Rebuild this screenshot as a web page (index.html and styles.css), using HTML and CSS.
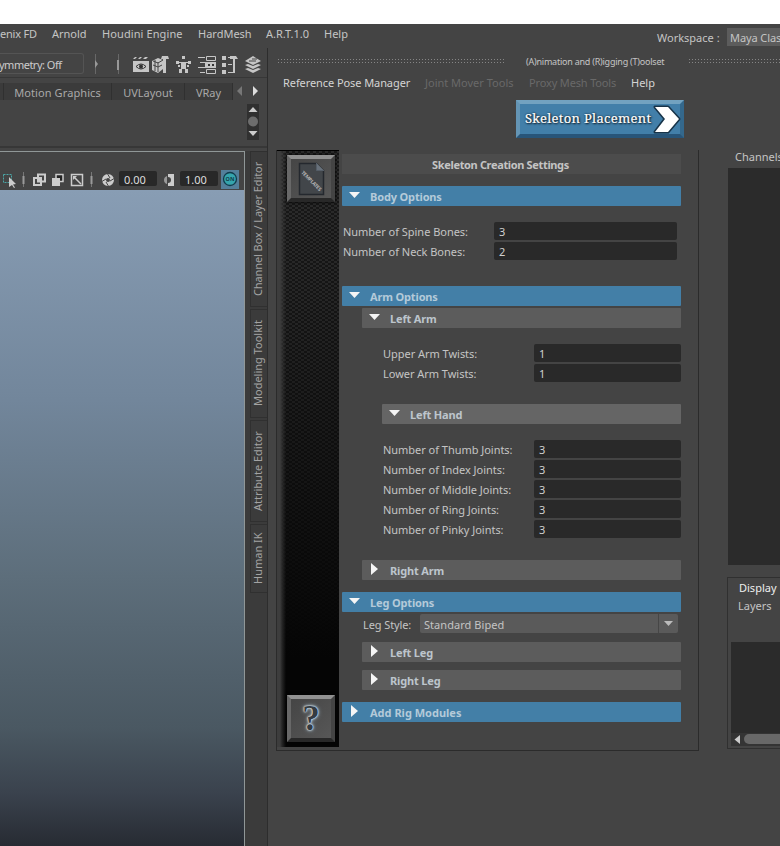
FILE: index.html
```html
<!DOCTYPE html>
<html lang="en">
<head>
<meta charset="utf-8">
<title>Animation and Rigging Toolset</title>
<link rel="stylesheet" href="styles.css">
</head>
<body>
<div class="blank"></div>
<nav class="menubar">
  <span class="m-fd">enix FD</span><span class="m-arnold">Arnold</span><span class="m-houdini">Houdini Engine</span><span class="m-hard">HardMesh</span><span class="m-art">A.R.T.1.0</span><span class="m-help">Help</span>
  <span class="m-work">Workspace :</span><span class="m-select">Maya Clas</span>
</nav>
<div class="main">
  <section class="left">
    <div class="status">
      <div class="symmetry">ymmetry: Off</div>
      <svg class="status-icons" width="183" height="30" viewBox="84 48 183 30">
        <path d="M95.500 54v20M118.500 54v20" stroke="#686868"/>
        <path d="M95 60l3 4-3 4z" fill="#999"/><path d="M117 60h2v10h-2z" fill="#999"/>
        <g fill="#c6c6c6">
          <path d="M133 61h16v11h-16z"/><path d="M133 59l2-2h2l-2 2zM138 59l2-2h2l-2 2zM143 59l2-2h3l-2 2z"/>
          <path d="M136 66.500q5-5 10 0q-5 5-10 0" fill="#c6c6c6" stroke="#333"/><circle cx="141" cy="66.500" r="2" fill="#333"/>
          <path d="M152 61l6-3 5 2v9l-5 4-6-3z"/><path d="M162 56h6l1 3h-3v14h-3V59h-2z"/>
          <path d="M153 65l5 2 4-2M158 62v10M155 60v11M153 61l5 2 5-3" fill="none" stroke="#444"/>
          <rect x="182" y="56" width="3" height="3"/><path d="M176 61h3v1h9v-1h3v3h-3v-1h-2v6h2v4h-3v-4h-3v4h-3v-4h2v-6h-2v1h-3z"/>
          <path d="M178 65h2v2h-2zM187 65h2v2h-2z"/>
          <path d="M198 57h7v1h-7zM200 62h5v1h-5zM198 67h7v1h-7zM200 72h5v1h-5z"/>
          <path d="M206.500 56.500h9v4h-9zM206.500 69.500h9v4h-9z" fill="none" stroke="#c6c6c6"/><path d="M205 62h11v6h-11z"/><path d="M208 64h2v2h-2zM212 64h2v2h-2z" fill="#333"/>
          <path d="M222 56h4v4h-4zM222 63h4v4h-4zM222 70h4v4h-4zM228 57h4v1h-4zM228 64h4v1h-4zM228 72h6v1h-6zM230 56h6l2 3h-3v14h-2V59h-3z"/>
          <path d="M245 69l8 4 8-4-3-1-5 2-5-2zM245 65l8 4 8-4-3-1-5 2-5-2zM245 61l8-5 8 5-8 4z"/><path d="M249 61h7M252 59h5" stroke="#444" fill="none"/>
        </g>
      </svg>
    </div>
    <div class="shelf-tabs">
      <span class="stub"></span><span class="t1">Motion Graphics</span><span class="t2">UVLayout</span><span class="t3">VRay</span>
      <svg width="34" height="17" viewBox="233 83 34 17"><path d="M242 86v10l-5-5z" fill="#777"/><path d="M253 86v10l5-5z" fill="#ddd"/></svg>
    </div>
    <div class="shelf">
      <div class="spin"><svg width="12" height="36"><path d="M1.500 8h9L6 3zM1.500 27h9L6 32z" fill="#ccc"/><circle cx="6" cy="17.500" r="5" fill="#6d6d6d"/></svg></div>
    </div>
    <div class="work">
      <div class="view">
        <div class="view-tools">
          <svg width="119" height="20" viewBox="0 170 119 20">
            <path d="M3.500 174.500h8v8h-8z" fill="none" stroke="#4aa6a6" stroke-dasharray="2 1"/><path d="M9 177l7 7-3 .5 2 3-1 .5-2-3-3 2z" fill="#ccc"/>
            <path d="M23.500 172v15M91.500 172v15" stroke="#777"/><path d="M23.500 176v8M91.500 176v8" stroke="#999" stroke-width="2"/>
            <path d="M34 178h7v7h-7zM38 174.500h7v7h-7z" fill="none" stroke="#ccc" stroke-width="2"/><path d="M38 178h3v3h-3z" fill="#ccc"/>
            <path d="M56 174.500h7v7h-7z" fill="#252525" stroke="#ccc" stroke-width="1.500"/><path d="M52 178h8v8h-8z" fill="#ccc"/>
            <path d="M71.500 174.500h11v11h-11z" fill="none" stroke="#ccc" stroke-width="1.500"/><path d="M74 177l7 7" stroke="#ccc" stroke-width="1.500"/><path d="M73 176h4l-4 4z" fill="#ccc"/>
            <circle cx="108" cy="180" r="4" fill="none" stroke="#ccc" stroke-width="4"/><path d="M107 173l3 5M115 178l-5 3M109 187l-3-5M101 182l5-3" stroke="#444"/>
          </svg>
          <span class="num">0.00</span>
          <svg width="23" height="20" viewBox="157 170 23 20"><path d="M168 174h6v12h-6v-3a3 3 0 0 0 0-6z" fill="#ccc"/><path d="M167 176v8q-3-1-3-4t3-4" fill="#999"/></svg>
          <span class="num">1.00</span>
          <span class="on"><svg width="18" height="18"><circle cx="9" cy="9" r="6.500" fill="#35a5ad" stroke="#113c4c" stroke-width="1.300"/><text x="9" y="11" text-anchor="middle" font-size="5.500" font-weight="bold" fill="#123d4c">ON</text></svg></span>
        </div>
        <div class="canvas"></div>
      </div>
      <div class="side-tabs"><span class="s1">Channel Box / Layer Editor</span><span class="s2">Modeling Toolkit</span><span class="s3">Attribute Editor</span><span class="s4">Human IK</span></div>
    </div>
  </section>
  <section class="right">
    <div class="titlebar"><i class="dots d1"></i><span class="tool-title">(A)nimation and (R)igging (T)oolset</span><i class="dots d2"></i></div>
    <div class="toolmenu"><span class="r1">Reference Pose Manager</span><span class="r2">Joint Mover Tools</span><span class="r3">Proxy Mesh Tools</span><span class="r4">Help</span></div>
    <div class="cta-row"><div class="cta"><span>Skeleton Placement</span>
      <svg width="32" height="34" viewBox="0 0 32 34"><path d="M4 5h13l11 12-11 13H4l10-13z" fill="none" stroke="#183449" stroke-width="3" stroke-linejoin="round"/><path d="M4 5h13l11 12-11 13H4l10-13z" fill="#fff"/></svg></div></div>
    <div class="columns">
      <div class="panel">
        <aside class="rail">
          <div class="tile"><svg width="48" height="47"><path d="M12.500 8.500h17l7 7v24h-24z" fill="#42464a" stroke="#24282e" stroke-width="1.500"/><path d="M29.500 8v7.500H37" fill="#68717b" stroke="#555e68"/><text x="0" y="0" transform="translate(14 18) rotate(45)" font-size="5" textLength="26" font-weight="bold" class="tiny">TEMPLATES</text></svg></div>
          <div class="tile help"><span>?</span></div>
        </aside>
        <div class="content">
          <h1>Skeleton Creation Settings</h1>
          <div class="bar blue body-bar"><i class="down"></i><b>Body Options</b></div>
          <div class="fields body-fields">
            <div class="field"><label>Number of Spine Bones:</label><span>3</span></div>
            <div class="field"><label>Number of Neck Bones:</label><span>2</span></div>
          </div>
          <div class="bar blue"><i class="down"></i><b>Arm Options</b></div>
          <div class="nested arms">
            <div class="bar"><i class="down"></i><b>Left Arm</b></div>
            <div class="fields deep">
              <div class="field"><label>Upper Arm Twists:</label><span>1</span></div>
              <div class="field"><label>Lower Arm Twists:</label><span>1</span></div>
            </div>
            <div class="bar hand"><i class="down"></i><b>Left Hand</b></div>
            <div class="fields deep">
              <div class="field"><label>Number of Thumb Joints:</label><span>3</span></div>
              <div class="field"><label>Number of Index Joints:</label><span>3</span></div>
              <div class="field"><label>Number of Middle Joints:</label><span>3</span></div>
              <div class="field"><label>Number of Ring Joints:</label><span>3</span></div>
              <div class="field"><label>Number of Pinky Joints:</label><span>3</span></div>
            </div>
            <div class="bar"><i class="next"></i><b>Right Arm</b></div>
          </div>
          <div class="bar blue"><i class="down"></i><b>Leg Options</b></div>
          <div class="nested legs">
            <div class="leg-style"><label>Leg Style:</label><div class="combo"><span>Standard Biped</span><i></i></div></div>
            <div class="bar"><i class="next"></i><b>Left Leg</b></div>
            <div class="bar"><i class="next"></i><b>Right Leg</b></div>
          </div>
          <div class="bar blue"><i class="next"></i><b class="add">Add Rig Modules</b></div>
        </div>
      </div>
      <aside class="channels">
        <div class="ch-title">Channels</div>
        <div class="ch-body"></div>
        <div class="layers">
          <div class="display">Display</div><div class="layer-menu">Layers</div>
          <div class="layer-list"><svg width="49" height="13"><path d="M9 2v9L3.500 6.500z" fill="#ccc"/><rect x="13" y="1" width="50" height="10" rx="5" fill="#686868"/></svg></div>
        </div>
      </aside>
    </div>
  </section>
</div>
</body>
</html>
```
FILE: styles.css
```css
* { box-sizing: border-box; }
body { margin: 0; width: 780px; height: 846px; overflow: hidden; background: #444; color: #c4c4c4; font: 11px/20px "Noto Sans", sans-serif; white-space: nowrap; }
.blank { height: 24px; background: #fff; }
.menubar { display: flex; height: 24px; line-height: 20px; }
.menubar span { flex: none; }
.m-fd { width: 52px; letter-spacing: -.2px; }
.m-arnold { width: 50px; }
.m-houdini { width: 96px; letter-spacing: .1px; }
.m-hard { width: 68px; }
.m-art { width: 58px; }
.m-help { width: 333px; }
.m-work { width: 70px; line-height: 28px; }
.menubar .m-select { height: 18px; width: 60px; margin-top: 4px; padding-left: 3px; background: #5c5c5c; line-height: 20px; letter-spacing: -.1px; }
.main { display: flex; height: 798px; }
.left { width: 268px; flex: none; border-right: 1px solid #2d2d2d; display: flex; flex-direction: column; }
.status { height: 30px; display: flex; flex: none; border-bottom: 1px solid #373737; }
.symmetry { width: 84px; height: 21px; flex: none; margin-top: 5px; border: 1px solid #545454; border-left: 0; border-radius: 0 3px 3px 0; line-height: 21px; color: #ccc; text-indent: -1px; letter-spacing: -.5px; }
.status-icons { flex: none; }
.shelf-tabs { height: 17px; margin-top: 5px; display: flex; flex: none; line-height: 20px; color: #a9a9a9; }
.shelf-tabs span { background: #3b3b3b; border-right: 1px solid #303030; text-align: center; flex: none; }
.shelf-tabs svg { flex: none; }
.stub { width: 4px; }
.t1 { width: 108px; letter-spacing: .1px; }
.t2 { width: 73px; }
.t3 { width: 48px; }
.shelf { height: 48px; flex: none; border-bottom: 2px solid #373737; display: flex; justify-content: flex-end; padding: 4px 8px 0 0; }
.spin { width: 12px; height: 36px; background: #303030; }
.work { display: flex; margin-top: 3px; flex: 1; }
.view { width: 245px; flex: none; border-top: 1px solid #909797; border-right: 1px solid #909797; display: flex; flex-direction: column; }
.view-tools { height: 38px; padding-top: 18px; display: flex; }
.view-tools > * { flex: none; }
.num { width: 38px; height: 15px; margin-top: 1px; padding-left: 5px; background: #282828; border-radius: 2px; line-height: 17px; color: #ddd; }
.on { width: 18px; height: 19px; margin-left: 3px; background: #537f9a; }
.canvas { flex: 1; background: linear-gradient(#889db4 0%, #72869b 32%, #5d6e7b 59%, #4a5862 82%, #3a424d 92%, #272b33 100%); }
.side-tabs { width: 22px; padding-left: 5px; background: #3b3b3b; display: flex; flex-direction: column; gap: 2px; color: #a3a3a3; }
.side-tabs span { width: 17px; flex: none; writing-mode: vertical-rl; transform: rotate(180deg); text-align: center; line-height: 14px; border: 1px solid #303030; border-left: 0; }
.s1 { height: 156px; letter-spacing: -.1px; }
.s2 { height: 109px; }
.s3 { height: 102px; }
.s4 { height: 69px; }
.right { width: 512px; display: flex; flex-direction: column; }
.titlebar { height: 25px; padding: 4px 0 0 9px; display: flex; }
.dots { height: 7px; margin-top: 6px; background: radial-gradient(circle, #858585 0 .6px, transparent .8px) 0 0 / 3px 3px; }
.d1 { width: 227px; }
.d2 { width: 92px; }
.tool-title { width: 184px; padding-left: 22px; font-size: 9px; line-height: 20px; letter-spacing: -.23px; }
.toolmenu { height: 27px; padding-left: 15px; display: flex; line-height: 19px; color: #d4d4d4; }
.r1 { width: 142px; letter-spacing: -.08px; }
.r2 { width: 104px; color: #696969; }
.r3 { width: 102px; color: #696969; letter-spacing: -.15px; }
.cta-row { height: 50px; padding-left: 248px; }
.cta { width: 168px; height: 38px; border: 4px solid; border-color: #72a2c0 #34688c #285579 #6495b5; background: #427fa9; padding-left: 5px; display: flex; color: #fff; font: 13px/29px "Noto Serif", "DejaVu Serif", serif; text-shadow: 0 0 2px #081824, 1px 1px 2px #081824; }
.cta span { width: 127px; flex: none; letter-spacing: .3px; -webkit-text-stroke: .2px #fff; }
.cta svg { flex: none; margin: -2px 0 0 -1px; }
.columns { display: flex; height: 696px; }
.panel { width: 423px; height: 601px; margin-left: 8px; border: solid #2b2b2b; border-width: 0 1px 1px; display: flex; flex: none; }
.rail { width: 62px; height: 597px; padding: 4px 4px 5px 10px; background: linear-gradient(90deg, #3d3d3d 0 3px, rgba(70,70,70,.5) 5px, transparent 9px), linear-gradient(transparent 0, rgba(0,0,0,.15) 25%, #050505 85%), conic-gradient(#181818 25%, #2c2c2c 0 50%, #181818 0 75%, #2c2c2c 0) 0 0 / 6px 4px; border-top: 1px solid #000; display: flex; flex-direction: column; justify-content: space-between; }
.tile { width: 48px; height: 47px; border: 4px solid; border-color: #919191 #444 #282828 #686868; background: linear-gradient(135deg, #454545, #575757); box-shadow: 0 0 3px #000; }
.tile svg { margin: -4px; }
.tiny { fill: #b5b5b5; }
.help { color: #343b42; font: bold 35px/40px "Liberation Serif", serif; text-align: center; text-shadow: 0 0 1px #e9f6ff, 0 0 2px #e9f6ff, 0 0 3px #b6c9d6, 0 0 5px #91a6b8; }
.content { width: 339px; margin-left: 3px; padding-top: 4px; }
h1 { margin: 0 0 12px; height: 20px; background: #4c4c4c; text-align: center; padding-right: 22px; font: bold 11px/22px "Noto Sans", sans-serif; letter-spacing: -.35px; color: #c4c4c4; }
.bar { height: 20px; background: #5c5c5c; border-radius: 1px; display: flex; line-height: 22px; color: #bdc5cc; }
.bar b { letter-spacing: -.15px; }
.bar .add { letter-spacing: 0; }
.blue { background: #437fa7; color: #b4cad9; }
.down, .next { width: 28px; flex: none; }
.down::before, .next::before { content: ""; display: block; background: #f5f5f5; }
.down::before { width: 11px; height: 6px; margin: 6px 0 0 7px; clip-path: polygon(0 0, 100% 0, 50% 100%); }
.next::before { width: 7px; height: 12px; margin: 3px 0 0 9px; clip-path: polygon(0 0, 100% 50%, 0 100%); }
.body-fields { margin: 16px 4px 26px 1px; }
.field { height: 18px; margin-bottom: 2px; display: flex; line-height: 20px; }
.field label { width: 151px; flex: none; letter-spacing: -.03px; }
.field span { flex: 1; padding-left: 5px; border-radius: 2px; background: #292929; color: #d0d0d0; }
.nested { margin-left: 20px; }
.arms { padding-top: 2px; margin-bottom: 12px; }
.deep { margin: 16px 0 22px 21px; }
.hand { margin-left: 20px; background: #656565; }
.leg-style { display: flex; height: 19px; margin: 2px 3px 9px 1px; line-height: 22px; }
.leg-style label { width: 57px; letter-spacing: -.1px; }
.combo { flex: 1; padding-left: 4px; background: #5a5a5a; border-radius: 2px; display: flex; justify-content: space-between; }
.combo span { letter-spacing: .05px; }
.combo i { width: 20px; border-left: 1px solid #464646; }
.combo i::before { content: ""; display: block; width: 9px; height: 5px; margin: 7px 0 0 5px; background: #bbb; clip-path: polygon(0 0, 100% 0, 50% 100%); }
.legs { margin-bottom: 12px; }
.legs .bar + .bar { margin-top: 8px; }
.channels { width: 53px; margin-left: 28px; overflow: hidden; padding-left: 1px; }
.ch-title { height: 18px; padding-left: 7px; line-height: 14px; }
.ch-body { height: 397px; background: #2b2b2b; }
.layers { height: 172px; margin: 12px 0 0 -1px; border: solid #303030; border-width: 1px 0 1px 1px; }
.display { height: 18px; padding-left: 11px; line-height: 20px; color: #eee; }
.layer-menu { height: 46px; padding-left: 10px; line-height: 20px; }
.layer-list { height: 104px; margin-left: 3px; background: #2b2b2b; display: flex; align-items: flex-end; }
.layer-list svg { background: #343434; }
```
